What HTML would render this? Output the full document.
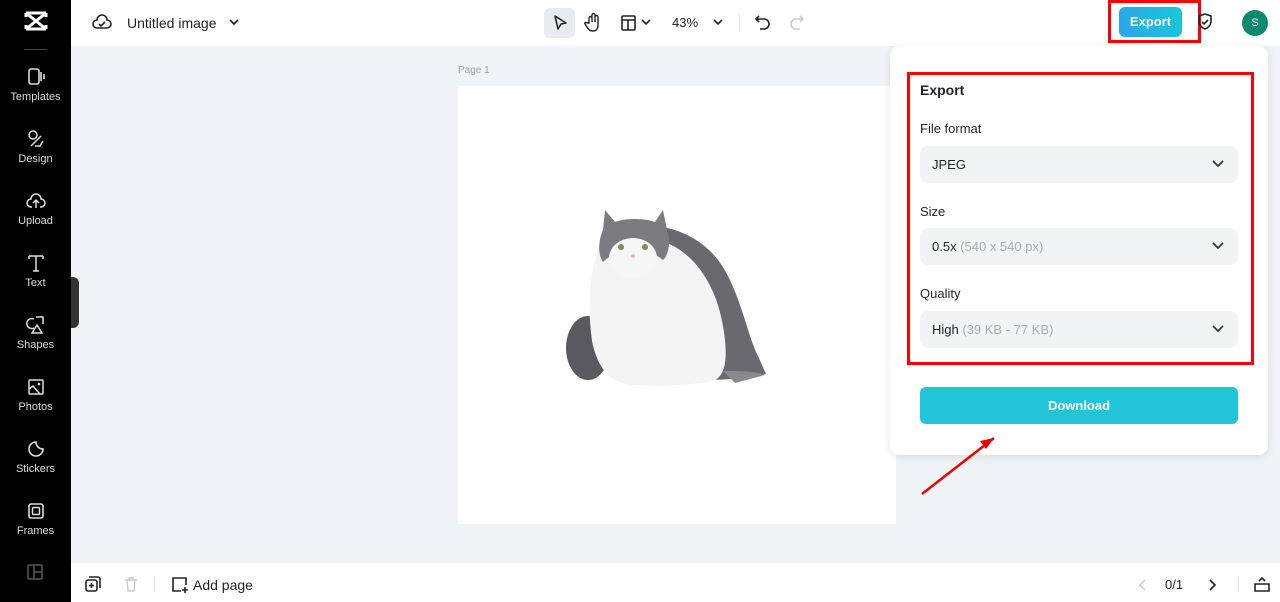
<!DOCTYPE html>
<html><head><meta charset="utf-8"><style>
*{box-sizing:border-box;margin:0;padding:0}
body{width:1280px;height:602px;overflow:hidden;font-family:"Liberation Sans",sans-serif;background:#f1f4f7;position:relative;color:#1f2329}
.abs{position:absolute}
.side{left:0;top:0;width:71px;height:602px;background:#000}
.si{position:absolute;left:0;width:71px;text-align:center;color:#ddd;font-size:11px}
.si svg{display:block;margin:0 auto 4px}
.top{left:71px;top:0;width:1209px;height:46px;background:#fff}
.bot{left:71px;top:563px;width:1209px;height:39px;background:#fff}
.panel{left:890px;top:46px;width:378px;height:409px;background:#fff;border-radius:10px;box-shadow:0 2px 10px rgba(0,0,0,.1)}
.lbl{font-size:13px;color:#1f2329}
.sel{position:absolute;left:920px;width:318px;height:37px;background:#f1f3f5;border-radius:8px;font-size:13px;padding:11px 12px;color:#1f2329}
.sel span{color:#a8adb3}
.sel svg{position:absolute;right:14px;top:13px}
.red{border:3px solid #f00}
</style></head><body>
<div class="abs side">
 <svg class="abs" style="left:23px;top:10px" width="26" height="22" viewBox="0 0 26 22"><path d="M3 3l20 16M23 3L3 19M3 3h20M3 19h20M3 3v4M23 3v4M3 19v-4M23 19v-4" stroke="#fff" stroke-width="3" fill="none"/></svg>
 <div class="abs" style="left:24px;top:49px;width:23px;height:1px;background:#444"></div>
 <div class="si" style="top:67px"><svg width="20" height="20"><rect x="3" y="2" width="10" height="15" rx="2" stroke="#ddd" stroke-width="1.6" fill="none"/><path d="M15 5v9M18 7v5" stroke="#ddd" stroke-width="1.6"/></svg>Templates</div>
 <div class="si" style="top:129px"><svg width="20" height="20"><circle cx="7" cy="6" r="4" stroke="#ddd" stroke-width="1.5" fill="none"/><path d="M5 17l10-10M9 17h5l3-5" stroke="#ddd" stroke-width="1.5" fill="none"/></svg>Design</div>
 <div class="si" style="top:191px"><svg width="20" height="20"><path d="M6 16H5a4 4 0 010-8 5 5 0 0110 0 4 4 0 010 8h-1M10 17V10M7 12l3-3 3 3" stroke="#ddd" stroke-width="1.5" fill="none"/></svg>Upload</div>
 <div class="si" style="top:253px"><svg width="20" height="20"><path d="M3 3h14M10 3v15M3 3v3M17 3v3M7 18h6" stroke="#ddd" stroke-width="1.5" fill="none"/></svg>Text</div>
 <div class="si" style="top:315px"><svg width="20" height="20"><path d="M8 4a5 5 0 100 9M10 2h7v7M6 18l5-8 5 8z" stroke="#ddd" stroke-width="1.5" fill="none"/></svg>Shapes</div>
 <div class="si" style="top:377px"><svg width="20" height="20"><rect x="3" y="3" width="14" height="14" rx="1" stroke="#ddd" stroke-width="1.5" fill="none"/><path d="M3 12l4-3 7 8" stroke="#ddd" stroke-width="1.5" fill="none"/><circle cx="13" cy="7" r="1.3" fill="#ddd"/></svg>Photos</div>
 <div class="si" style="top:439px"><svg width="20" height="20"><path d="M10 3a7 7 0 107 7c-4 0-7-3-7-7z" stroke="#ddd" stroke-width="1.6" fill="none"/></svg>Stickers</div>
 <div class="si" style="top:501px"><svg width="20" height="20"><rect x="3" y="3" width="14" height="14" rx="2" stroke="#ddd" stroke-width="1.6" fill="none"/><rect x="6.5" y="6.5" width="7" height="7" rx="1" stroke="#ddd" stroke-width="1.5" fill="none"/></svg>Frames</div>
 <svg class="abs" style="left:27px;top:564px" width="16" height="16"><rect x="1" y="1" width="14" height="14" rx="1" stroke="#555" stroke-width="1.5" fill="none"/><path d="M7 1v14M7 8h8" stroke="#555" stroke-width="1.5"/></svg>
</div>
<div class="abs" style="left:71px;top:277px;width:8px;height:51px;background:#333;border-radius:0 6px 6px 0"></div>
<div class="abs top">
 <svg class="abs" style="left:21px;top:13px" width="20" height="18"><path d="M6 15H5a4 4 0 010-8 5 5 0 0110 0 4 4 0 010 8H6zM7 11l2 2 4-4" stroke="#222" stroke-width="1.6" fill="none"/></svg>
 <div class="abs" style="left:56px;top:15px;font-size:14px;color:#222">Untitled image</div>
 <svg class="abs" style="left:157px;top:17px" width="12" height="10"><path d="M2 3l4 4 4-4" stroke="#222" stroke-width="1.7" fill="none"/></svg>
 <div class="abs" style="left:473px;top:8px;width:31px;height:30px;background:#e9ecef;border-radius:6px"></div>
 <svg class="abs" style="left:480px;top:13px" width="18" height="20"><path d="M4 3l11 7-5 1-3 5z" stroke="#222" stroke-width="1.6" fill="none" stroke-linejoin="round"/></svg>
 <svg class="abs" style="left:513px;top:12px" width="18" height="20"><path d="M5 11V6a1.5 1.5 0 013 0v4V3a1.5 1.5 0 013 0v7V5a1.5 1.5 0 013 0v8c0 4-2 6-5 6s-4-1-6-4l-2-3c-1-2 1-2 2-1z" stroke="#222" stroke-width="1.4" fill="none"/></svg>
 <svg class="abs" style="left:549px;top:14px" width="18" height="18"><rect x="2" y="2" width="13" height="14" rx="1" stroke="#222" stroke-width="1.6" fill="none"/><path d="M2 6h13M8 6v10" stroke="#222" stroke-width="1.6"/></svg>
 <svg class="abs" style="left:569px;top:17px" width="12" height="10"><path d="M2 3l4 4 4-4" stroke="#222" stroke-width="1.6" fill="none"/></svg>
 <div class="abs" style="left:601px;top:15px;font-size:13px;color:#222">43%</div>
 <svg class="abs" style="left:641px;top:17px" width="12" height="10"><path d="M2 3l4 4 4-4" stroke="#222" stroke-width="1.6" fill="none"/></svg>
 <div class="abs" style="left:668px;top:14px;width:1px;height:18px;background:#e2e4e7"></div>
 <svg class="abs" style="left:683px;top:13px" width="18" height="18"><path d="M5 3L2 6l3 3M2 6h8a5 5 0 010 10H6" stroke="#222" stroke-width="1.6" fill="none"/></svg>
 <svg class="abs" style="left:717px;top:13px" width="18" height="18"><path d="M12 3l3 3-3 3M15 6H8a5 5 0 000 10h4" stroke="#ccc" stroke-width="1.6" fill="none"/></svg>
 <div class="abs" style="left:1048px;top:7px;width:63px;height:30px;border-radius:6px;background:linear-gradient(90deg,#2ba6e8,#18c8d8);color:#fff;font-weight:bold;font-size:13px;text-align:center;line-height:30px">Export</div>
 <div class="abs red" style="left:1037px;top:0;width:93px;height:43px"></div>
 <svg class="abs" style="left:1125px;top:12px" width="18" height="20"><path d="M9 2l6 2v5c0 4-3 7-6 8-3-1-6-4-6-8V4z" stroke="#222" stroke-width="1.6" fill="none"/><path d="M6 10l2 2 4-4" stroke="#222" stroke-width="1.6" fill="none"/></svg>
 <div class="abs" style="left:1171px;top:10px;width:26px;height:26px;border-radius:50%;background:#0b8a6f;color:#fff;font-size:11px;text-align:center;line-height:26px">S</div>
</div>
<div class="abs" style="left:458px;top:65px;font-size:10px;color:#9aa0a6">Page 1</div>
<div class="abs" style="left:458px;top:86px;width:438px;height:438px;background:#fff">
 <svg width="438" height="438" viewBox="0 0 438 438">
  <path d="M200 140c30 5 55 20 70 50 15 30 20 60 30 80l8 18c-20 4-50 8-70 4z" fill="#6a6a6e"/>
  <ellipse cx="130" cy="262" rx="22" ry="32" fill="#5a5a5e"/>
  <path d="M140 165c-10 30-10 60-6 90 6 30 20 42 40 44 30 2 60 0 80-4 16-4 16-30 10-60-8-40-30-70-60-80-30-6-56-8-64 10z" fill="#f4f4f4"/>
  <path d="M147 124l10 12c10-4 30-4 40 0l8-12 4 20c4 10 2 25-4 30-10-8-20-10-30-10s-22 4-30 12c-6-8-4-24 0-32z" fill="#7c7c80"/>
  <ellipse cx="175" cy="172" rx="24" ry="20" fill="#f6f6f6"/>
  <circle cx="163" cy="161" r="3" fill="#8a8a50"/><circle cx="187" cy="161" r="3" fill="#8a8a50"/>
  <circle cx="175" cy="170" r="1.8" fill="#e6a8b0"/>
  <path d="M265 285c15 0 30 0 42 4l-30 8z" fill="#8a8a8e"/>
 </svg>
</div>
<div class="abs panel"></div>
<div class="abs" style="left:920px;top:82px;font-size:14px;font-weight:bold">Export</div>
<div class="abs lbl" style="left:920px;top:121px">File format</div>
<div class="sel" style="top:146px">JPEG<svg width="12" height="10"><path d="M1 2l5 5 5-5" stroke="#333" stroke-width="1.7" fill="none"/></svg></div>
<div class="abs lbl" style="left:920px;top:204px">Size</div>
<div class="sel" style="top:228px">0.5x <span>(540 x 540 px)</span><svg width="12" height="10"><path d="M1 2l5 5 5-5" stroke="#333" stroke-width="1.7" fill="none"/></svg></div>
<div class="abs lbl" style="left:920px;top:286px">Quality</div>
<div class="sel" style="top:311px">High <span>(39 KB - 77 KB)</span><svg width="12" height="10"><path d="M1 2l5 5 5-5" stroke="#333" stroke-width="1.7" fill="none"/></svg></div>
<div class="abs red" style="left:907px;top:72px;width:347px;height:293px"></div>
<div class="abs" style="left:920px;top:387px;width:318px;height:37px;border-radius:6px;background:#22c4d8;color:#fff;font-weight:bold;font-size:13px;text-align:center;line-height:37px">Download</div>
<svg class="abs" style="left:918px;top:430px" width="82" height="68"><path d="M4 64L76 8" stroke="#e00" stroke-width="2.5"/><path d="M76 8l-14 3 6 8z" fill="#e00"/></svg>
<div class="abs bot">
 <svg class="abs" style="left:14px;top:13px" width="16" height="16"><rect x="1" y="4" width="11" height="11" rx="2" stroke="#222" stroke-width="1.6" fill="none"/><path d="M4 1h9a2 2 0 012 2v9M6.5 7v5M4 9.5h5" stroke="#222" stroke-width="1.6" fill="none"/></svg>
 <svg class="abs" style="left:52px;top:13px" width="16" height="16"><path d="M2 4h12M6 4V2h4v2M4 4l1 11h6l1-11" stroke="#ccc" stroke-width="1.4" fill="none"/></svg>
 <div class="abs" style="left:83px;top:13px;width:1px;height:16px;background:#e2e4e7"></div>
 <svg class="abs" style="left:100px;top:13px" width="18" height="18"><path d="M15 9V2H2v13h8M14 11v6M11 14h6" stroke="#222" stroke-width="1.6" fill="none"/></svg>
 <div class="abs" style="left:122px;top:14px;font-size:14px;color:#222">Add page</div>
 <svg class="abs" style="left:1067px;top:15px" width="10" height="14"><path d="M7 2L2 7l5 5" stroke="#ccc" stroke-width="1.5" fill="none"/></svg>
 <div class="abs" style="left:1094px;top:14px;font-size:13px;color:#222">0/1</div>
 <svg class="abs" style="left:1136px;top:15px" width="10" height="14"><path d="M3 2l5 5-5 5" stroke="#222" stroke-width="1.6" fill="none"/></svg>
 <div class="abs" style="left:1167px;top:13px;width:1px;height:16px;background:#e2e4e7"></div>
 <svg class="abs" style="left:1182px;top:13px" width="18" height="16"><path d="M2 8h14v7H2zM6 5l3-3 3 3" stroke="#222" stroke-width="1.6" fill="none"/></svg>
</div>
</body></html>
